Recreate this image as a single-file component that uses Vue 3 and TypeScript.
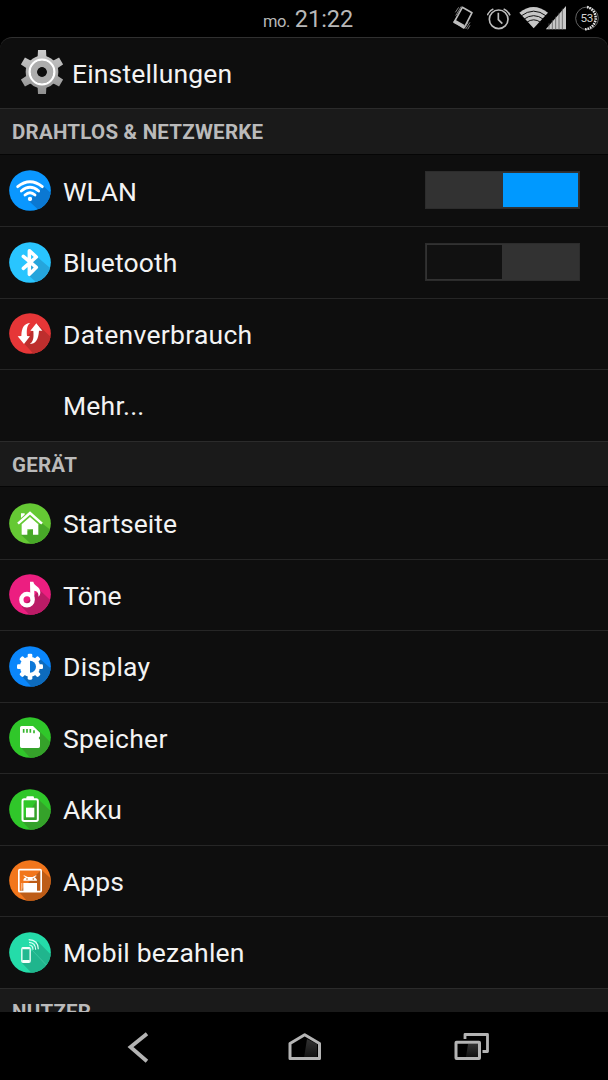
<script setup lang="ts">
interface Row {
  id: string
  label: string
  spacing: number
  color?: string
  shade?: string
  shadow?: string
  toggle?: boolean
}
interface Section {
  title: string
  rows: Row[]
}

const sections: Section[] = [
  {
    title: 'DRAHTLOS & NETZWERKE',
    rows: [
      { id: 'wifi', label: 'WLAN', spacing: -0.1, color: '#0a97ff', shade: '#0b78d2', shadow: 'M104 49 L126 70 V123 H92 L59 92 Z', toggle: true },
      { id: 'bluetooth', label: 'Bluetooth', spacing: 0.1, color: '#29c5ff', shade: '#25a5dc', shadow: 'M84 44 L126 80 V123 H84 L60 101 L64 62 Z', toggle: false },
      { id: 'data', label: 'Datenverbrauch', spacing: 0.27, color: '#e63637', shade: '#bd2e2d', shadow: 'M84 32 L126 73 V123 H74 L42 88 L62 62 Z' },
      { id: 'more', label: 'Mehr...', spacing: 0.2 },
    ],
  },
  {
    title: 'GERÄT',
    rows: [
      { id: 'home', label: 'Startseite', spacing: 0, color: '#65c934', shade: '#48a928', shadow: 'M98 60 L126 82 V123 H66 L36 95 Z' },
      { id: 'sound', label: 'Töne', spacing: 0.1, color: '#ec1e80', shade: '#bb1b66', shadow: 'M92 48 L126 80 V123 H62 L38 98 L70 70 Z' },
      { id: 'display', label: 'Display', spacing: 0.25, color: '#0a86fb', shade: '#0d6bbd', shadow: 'M90 36 L126 68 V123 H68 L38 90 Z' },
      { id: 'storage', label: 'Speicher', spacing: 0.25, color: '#30c72a', shade: '#35a22a', shadow: 'M85 37 L126 77 V123 H64 L35 91 Z' },
      { id: 'battery', label: 'Akku', spacing: 0.05, color: '#30c72a', shade: '#35a22a', shadow: 'M87 30 L126 67 V123 H64 L39 97 Z' },
      { id: 'apps', label: 'Apps', spacing: 0.05, color: '#f2761c', shade: '#bd5c17', shadow: 'M97 29 L126 56 V123 H54 L30 96 Z' },
      { id: 'pay', label: 'Mobil bezahlen', spacing: 0.2, color: '#24dca9', shade: '#20b58d', shadow: 'M86 28 L126 68 V123 H68 L38 92 L64 62 Z' },
    ],
  },
  { title: 'NUTZER', rows: [] },
]

const gearTeeth: number[] = [0, 60, 120, 180, 240, 300]
const displayTeeth: number[] = [0, 45, 90, 135, 180, 225, 270, 315]
</script>

<template>
  <div class="screen">
    <header class="status">
      <div class="clock"><span class="day">mo.</span><span class="time">21:22</span></div>
      <div class="tray">
        <svg width="35" height="40" viewBox="36 0 105 120">
          <path d="M67 22 L96 38 L73 83 L42 67 Z" fill="none" stroke="#bdbdbd" stroke-width="5" stroke-linejoin="round" />
          <path d="M40 65 L46 59 L74 75 L71 87 Z" fill="#bdbdbd" />
          <path d="M47 47 L64 19 M51 49 L59 35 M46 37 L56 22 M77 87 L90 67 M76 79 L84 68 M83 88 L90 76" stroke="#9a9a9a" stroke-width="2.5" />
        </svg>
        <svg width="32" height="40" viewBox="141 0 96 120" fill="none" stroke="#bdbdbd" stroke-width="5">
          <circle cx="176" cy="58" r="28" />
          <path d="M175 38 V59 L187 71" />
          <path d="M142 46 Q147 32 160 27 M191 27 Q204 32 210 46" />
        </svg>
        <svg class="wide" width="27" height="40" viewBox="237 0 81 120">
          <path d="M238 38 Q280 4 324 38 L281 85 Z" fill="#c6c6c6" />
          <path d="M243 48 Q281 19 319 48 M251 58 Q281 36 311 58 M260 67 Q281 52 302 67" fill="none" stroke="#111" stroke-width="3" />
        </svg>
        <svg width="28" height="40" viewBox="318 0 84 120">
          <path d="M317 88 L378 18 V88 Z" fill="#c8c8c8" />
          <path d="M327 70 V90 M337 60 V90 M347 50 V90 M357 38 V90 M367 26 V90" stroke="#555" stroke-width="2.2" />
        </svg>
        <svg width="34" height="40" viewBox="402 0 102 120">
          <circle cx="441" cy="55" r="34" fill="none" stroke="#777" stroke-width="2.5" />
          <path d="M441 21 A34 34 0 0 1 435 88" fill="none" stroke="#e4e4e4" stroke-width="7.5" stroke-dasharray="5 2.6" />
          <text x="440" y="67" text-anchor="middle" class="pct">53</text>
        </svg>
      </div>
    </header>

    <main class="panel">
      <div class="title">
        <svg class="gear" width="42" height="46" viewBox="0 0 126 138">
          <defs>
            <linearGradient id="metal" x1="0" y1="0" x2="0" y2="138" gradientUnits="userSpaceOnUse">
              <stop offset="0" stop-color="#cecece" />
              <stop offset="1" stop-color="#8f8f8f" />
            </linearGradient>
          </defs>
          <mask id="teeth">
            <path v-for="a in gearTeeth" :key="a" d="M44 30 L50 22 L51 3 H75 L76 22 L82 30 Z" fill="#fff" :transform="`rotate(${a} 63 69)`" />
            <circle cx="63" cy="69" r="49" fill="#fff" />
            <circle cx="63" cy="69" r="15" fill="#000" />
          </mask>
          <rect width="126" height="138" fill="url(#metal)" mask="url(#teeth)" />
          <circle cx="63" cy="69" r="37" fill="none" stroke="#fff" stroke-width="7" />
          <circle cx="63" cy="69" r="24.500" fill="none" stroke="#adadad" stroke-width="18" />
        </svg>
        <h1>Einstellungen</h1>
      </div>

      <section v-for="s in sections" :key="s.title">
        <h2>{{ s.title }}</h2>
        <div v-for="r in s.rows" :key="r.id" class="row">
          <div class="icon">
            <svg v-if="r.color" width="42" height="41" viewBox="0 0 126 123">
              <clipPath :id="`disc-${r.id}`"><ellipse cx="63" cy="61.5" rx="62.5" ry="61" /></clipPath>
              <g :clip-path="`url(#disc-${r.id})`">
                <rect width="126" height="123" :fill="r.color" />
                <path :d="r.shadow" :fill="r.shade" />
              </g>
              <g v-if="r.id === 'wifi'" fill="none" stroke="#fff" stroke-width="8.5" stroke-linecap="round">
                <path d="M26 50 Q63 20 100 50" />
                <path d="M37 63 Q63 41 89 63" />
                <path d="M48 75 Q63 61 78 75" />
                <circle cx="63" cy="87" r="6.5" fill="#fff" stroke="none" />
              </g>
              <g v-else-if="r.id === 'bluetooth'" fill="none" stroke="#fff" stroke-width="10.5" stroke-linecap="round" stroke-linejoin="round">
                <path d="M43 43 L82 76 L61 97 V26 L82 45 L43 79" />
              </g>
              <g v-else-if="r.id === 'data'" fill="#fff">
                <path d="M64 30 C46 31 38 42 37 69 L26 70 L45 93 L63 70 L54 69 C52 47 55 36 64 30 Z" />
                <path d="M62 93 C80 92 88 81 90 53 L100 53 L82 31 L64 53 L73 54 C75 76 72 88 62 93 Z" />
              </g>
              <g v-else-if="r.id === 'home'" fill="#fff">
                <path d="M36 31 H47 V35 L36 45 Z" />
                <path d="M27 62 L63 30 L99 62" fill="none" stroke="#fff" stroke-width="7.5" />
                <path d="M63 42 L88 64 V95 H72 V79 H55 V95 H38 V64 Z" />
              </g>
              <g v-else-if="r.id === 'sound'">
                <circle cx="54" cy="77" r="17" fill="none" stroke="#fff" stroke-width="13" />
                <path d="M63 23 H73 C75 36 94 37 94 55 C94 62 91 67 88 68 C90 54 82 51 76 50 V77 H64 Z" fill="#fff" />
              </g>
              <g v-else-if="r.id === 'display'">
                <rect v-for="a in displayTeeth" :key="a" x="56" y="23" width="14" height="20" rx="4" fill="#fff" :transform="`rotate(${a} 63 62)`" />
                <circle cx="63" cy="62" r="30" fill="#fff" />
                <path d="M63 44 A18 18 0 0 1 63 80 Z" fill="#0d78d8" />
              </g>
              <g v-else-if="r.id === 'storage'">
                <path d="M38 27 H72 L93 47 V58 L89 63 L93 68 V88 Q93 93 88 93 H38 Q33 93 33 88 V32 Q33 27 38 27 Z" fill="#fff" />
                <path d="M44 36 V47 M54 36 V47 M64 36 V47 M75 40 V49" stroke="#34b52b" stroke-width="5" />
              </g>
              <g v-else-if="r.id === 'battery'">
                <rect x="40.500" y="31" width="46" height="65" rx="5" fill="none" stroke="#fff" stroke-width="6" />
                <path d="M52 30 V26 Q52 22 56 22 H71 Q75 22 75 26 V30 Z" fill="#fff" />
                <rect x="51" y="56" width="25" height="29" fill="#fff" />
              </g>
              <g v-else-if="r.id === 'apps'">
                <rect x="29.500" y="29" width="67" height="66" rx="3" fill="none" stroke="#fff" stroke-width="5" />
                <path d="M43 62 C43 56 47 53 51 52 L43 48 L45 46 L56 51 H71 L81 46 L83 48 L76 52 C81 54 84 58 84 62 Z" fill="#fff" />
                <path d="M43 69 H84 V95 H43 Z" fill="#fff" />
                <path d="M38.500 69 V92" stroke="#fff" stroke-width="2" />
                <circle cx="54" cy="57" r="2.500" fill="#bd5c17" />
                <circle cx="73" cy="57" r="2.500" fill="#bd5c17" />
              </g>
              <g v-else fill="none" stroke="#d9fff3">
                <path d="M67 52 L112 99" stroke="#48d0aa" stroke-width="2" />
                <rect x="38.500" y="47" width="25" height="44" rx="4" fill="#22b891" stroke="#f4fffb" stroke-width="4" />
                <path d="M40 49 H62 M40 87 H62" stroke="#f4fffb" stroke-width="6" />
                <path d="M61 39 Q72 40 72 53 M60 31 Q80 32 80 53 M59 23 Q88 24 88 52" stroke-width="3.500" />
              </g>
            </svg>
          </div>
          <span class="label" :style="{ letterSpacing: `${r.spacing}px` }">{{ r.label }}</span>
          <div v-if="r.toggle !== undefined" class="switch" :class="{ on: r.toggle }"><i></i><b></b></div>
        </div>
      </section>
    </main>

    <nav class="nav">
      <svg width="100" height="68" viewBox="0 0 100 68">
        <path d="M57.500 23 L42.500 35 L57.500 48" fill="none" stroke="#b4b4b4" stroke-width="3.800" stroke-linecap="square" />
      </svg>
      <svg width="100" height="68" viewBox="0 0 100 68">
        <defs>
          <linearGradient id="glass" x1="0" y1="0" x2="0" y2="1">
            <stop offset="0" stop-color="#333" />
            <stop offset="1" stop-color="#111" />
          </linearGradient>
        </defs>
        <path d="M53 27 L63 32 V46 H50 Z" fill="url(#glass)" />
        <path d="M36 31.500 L50.700 22.800 L65.500 31.500 V46.500 H36 Z" fill="none" stroke="#b4b4b4" stroke-width="3" stroke-linejoin="round" />
      </svg>
      <svg width="100" height="68" viewBox="0 0 100 68">
        <path d="M47 32 H57 V45 H45 Z" fill="url(#glass)" />
        <rect x="35" y="30.300" width="23.500" height="16.200" rx="0.500" fill="none" stroke="#b4b4b4" stroke-width="3" />
        <path d="M44 27 V22.500 H66.500 V39.500 H61.500" fill="none" stroke="#b4b4b4" stroke-width="2.800" stroke-linejoin="round" />
      </svg>
    </nav>
  </div>
</template>

<style>
body {
  margin: 0;
  background: #000;
}
</style>

<style scoped>
.screen {
  width: 608px;
  height: 1080px;
  overflow: hidden;
  display: flex;
  flex-direction: column;
  background: #000;
  font-family: Roboto, "Liberation Sans", sans-serif;
  color: #f3f3f3;
}
.status {
  height: 37px;
  flex: none;
  display: flex;
  justify-content: space-between;
}
.clock {
  padding-left: 263px;
  color: #b8b8b8;
  line-height: 39px;
  white-space: nowrap;
}
.day {
  font-size: 16.5px;
  letter-spacing: -0.5px;
  margin-right: 5px;
}
.time {
  font-size: 23.5px;
}
.tray {
  display: flex;
  height: 40px;
}
.wide {
  overflow: visible;
}
.pct {
  font-size: 35px;
  letter-spacing: -1px;
  fill: #d4d4d4;
}
.panel {
  height: 975px;
  flex: none;
  overflow: hidden;
  box-sizing: border-box;
  border-top: 1px solid #303030;
  border-radius: 12px 12px 0 0;
  background: #0e0e0e;
}
.title {
  height: 70.4px;
  display: flex;
  align-items: center;
  padding-left: 21px;
}
.gear {
  margin: -2px 9px 0 0;
}
h1 {
  margin: 1px 0 0;
  font-size: 26.5px;
  font-weight: 400;
  letter-spacing: 0.15px;
}
h2 {
  margin: 0;
  box-sizing: border-box;
  height: 46.5px;
  border-top: 1px solid #2b2b2b;
  border-bottom: 1px solid #050505;
  padding-left: 12px;
  background: #1a1a1a;
  color: #bababa;
  font-size: 20.5px;
  font-weight: 700;
  line-height: 47px;
  letter-spacing: 0.24px;
}
.row {
  box-sizing: border-box;
  height: 71.5px;
  display: flex;
  align-items: center;
  border-top: 1px solid #262626;
  padding: 0 28px 0 9px;
}
h2 + .row {
  border-top-color: #0e0e0e;
}
.icon {
  width: 54px;
  height: 41px;
  margin-top: -1px;
}
.icon svg {
  display: block;
}
.label {
  flex: 1;
  margin-top: 1px;
  font-size: 26.5px;
  line-height: 32px;
}
.switch {
  box-sizing: border-box;
  width: 155px;
  height: 38px;
  margin-top: -2px;
  padding: 1px;
  display: flex;
  background: #323232;
  border: 1px solid #2c2c2c;
}
.switch i {
  width: 75px;
  background: #111;
}
.switch b {
  flex: 1;
}
.switch.on i {
  width: 76px;
  background: #323232;
}
.switch.on b {
  background: #0099ff;
}
.nav {
  height: 68px;
  display: flex;
  justify-content: center;
  gap: 67px;
  background: #000;
}
.nav svg:first-child {
  margin: 0 -1px 0 1px;
}
</style>
